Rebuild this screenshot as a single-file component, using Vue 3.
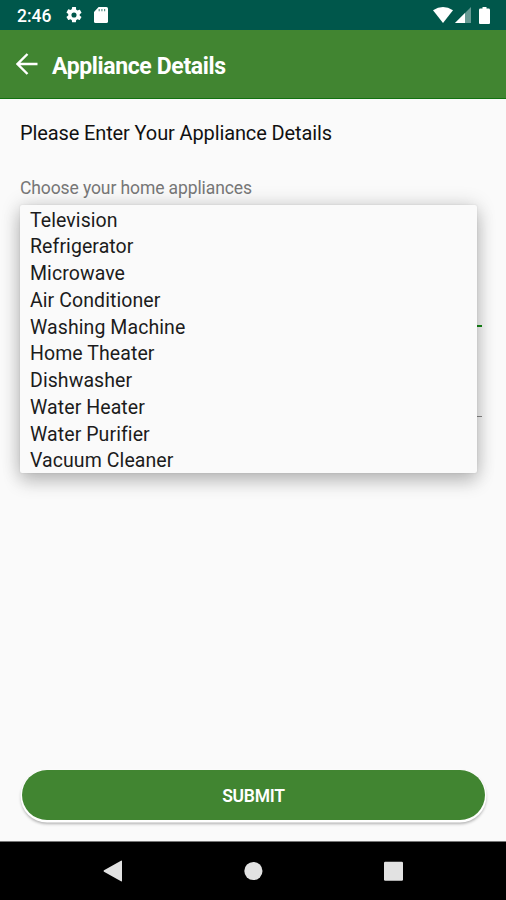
<template>
  <div class="screen">
    <header class="status-bar">
      <div class="status-left">
        <span class="clock">2:46</span>
        <svg class="icon-gear" viewBox="2 2 20 20">
          <path
            d="M19.14 12.94c.04-.3.06-.61.06-.94 0-.32-.02-.64-.07-.94l2.03-1.58a.49.49 0 0 0 .12-.61l-1.92-3.32a.49.49 0 0 0-.59-.22l-2.39.96a7 7 0 0 0-1.62-.94l-.36-2.54A.48.48 0 0 0 13.92 2h-3.84a.48.48 0 0 0-.48.41l-.36 2.54c-.59.24-1.13.57-1.62.94l-2.39-.96a.48.48 0 0 0-.59.22L2.72 8.47a.48.48 0 0 0 .12.61l2.03 1.58c-.05.3-.09.63-.09.94s.02.64.07.94l-2.03 1.58a.49.49 0 0 0-.12.61l1.92 3.32c.12.22.37.29.59.22l2.39-.96c.5.38 1.03.7 1.62.94l.36 2.54c.05.24.24.41.48.41h3.84c.24 0 .44-.17.47-.41l.36-2.54a7 7 0 0 0 1.62-.94l2.39.96c.22.08.47 0 .59-.22l1.92-3.32a.48.48 0 0 0-.12-.61zM12 15.2a3.2 3.2 0 1 1 0-6.4 3.2 3.2 0 0 1 0 6.4z"
          />
        </svg>
        <svg class="icon-card" viewBox="0 0 14 16">
          <path d="M4.6 0H12.4Q14 0 14 1.6V14.4Q14 16 12.4 16H1.6Q0 16 0 14.4V5z" />
          <path class="contacts" d="M5.2 2v2.2M7.9 2v2.2M10.6 2v2.2" />
        </svg>
      </div>
      <div class="status-right">
        <svg class="icon-wifi" viewBox="0 0 20 16">
          <path d="M0 3.2Q10-3.2 20 3.2L10 16z" />
        </svg>
        <svg class="icon-signal" viewBox="0 0 16 16">
          <path opacity="0.4" d="M0 16L16 0V16z" />
          <path d="M0 16L10 6V16z" />
        </svg>
        <svg class="icon-battery" viewBox="0 0 11 17">
          <path d="M3.5 0h4v1.6H9.6q1.4 0 1.4 1.4V16q0 1-1 1H1q-1 0-1-1V3q0-1.4 1.4-1.4h2.1z" />
        </svg>
      </div>
    </header>

    <div class="toolbar">
      <svg class="icon-back" viewBox="0 0 22 22">
        <path d="M21.5 11H2M11.5 1L1.5 11l10 10" />
      </svg>
      <h1>Appliance Details</h1>
    </div>

    <main class="content">
      <h2>Please Enter Your Appliance Details</h2>
      <label class="field-label">Choose your home appliances</label>
      <div class="fields">
        <div class="field active"></div>
        <div class="field"></div>
        <ul class="dropdown">
          <li v-for="appliance in appliances" :key="appliance">{{ appliance }}</li>
        </ul>
      </div>
      <button class="submit" type="button">SUBMIT</button>
    </main>

    <nav class="nav-bar">
      <svg viewBox="0 0 20 22"><path d="M19 1.2V20.8Q19 21.8 18 21.2L1 11.8Q0 11 1 10.2L18 .8Q19 .2 19 1.2z" /></svg>
      <svg viewBox="0 0 20 22"><circle cx="10.4" cy="11" r="9.1" /></svg>
      <svg viewBox="0 0 20 22"><rect x="1" y="1.7" width="19" height="19" rx="1.2" /></svg>
    </nav>
  </div>
</template>

<script setup>
import { ref } from "vue";

const appliances = ref([
  "Television",
  "Refrigerator",
  "Microwave",
  "Air Conditioner",
  "Washing Machine",
  "Home Theater",
  "Dishwasher",
  "Water Heater",
  "Water Purifier",
  "Vacuum Cleaner",
]);
</script>

<style>
body {
  margin: 0;
  background: #fafafa;
}
</style>

<style scoped>
.screen {
  display: flex;
  flex-direction: column;
  height: 900px;
  overflow: hidden;
  background: #fafafa;
  font-family: Roboto, "Noto Sans", sans-serif;
}

.status-bar {
  display: flex;
  justify-content: space-between;
  box-sizing: border-box;
  height: 30px;
  padding: 0 16px 0 17px;
  background: #00574b;
  color: #fff;
  fill: #fff;
}

.status-left,
.status-right {
  display: flex;
  align-items: center;
}

.clock {
  font-size: 17.5px;
  font-weight: 500;
  line-height: 30px;
  padding-top: 2px;
  width: 49px;
}

.icon-gear {
  width: 16px;
  height: 16px;
  margin-right: 12px;
}

.icon-card {
  width: 14px;
  height: 16px;
}

.contacts {
  stroke: #00574b;
  stroke-width: 1.2;
  stroke-opacity: 0.65;
}

.icon-wifi {
  width: 20px;
  height: 16px;
  margin-right: 2px;
}

.icon-signal {
  width: 16px;
  height: 16px;
  margin-right: 8px;
}

.icon-battery {
  width: 11px;
  height: 17px;
}

.toolbar {
  display: flex;
  align-items: center;
  box-sizing: border-box;
  height: 69px;
  padding: 0 16px;
  background: #418531;
  border-bottom: 1px solid #127210;
  color: #fff;
}

.icon-back {
  width: 22px;
  height: 22px;
  margin-right: 14px;
  fill: none;
  stroke: #fff;
  stroke-width: 2.4;
}

h1 {
  margin: 5px 0 0;
  font-size: 23px;
  font-weight: 700;
  line-height: 28px;
  letter-spacing: -0.37px;
}

.content {
  display: flex;
  flex: 1;
  flex-direction: column;
  padding: 20px 20px 21px;
}

h2 {
  margin: 0;
  color: #111;
  font-size: 20px;
  font-weight: 400;
  line-height: 28px;
  letter-spacing: -0.12px;
}

.field-label {
  margin-top: 29px;
  color: #777;
  font-size: 17.5px;
  line-height: 24px;
  letter-spacing: -0.1px;
}

.fields {
  position: relative;
  margin: 5px 4px 0 0;
}

.field {
  box-sizing: border-box;
  height: 90px;
  border-bottom: 1px solid #8a8a8a;
}

.field.active {
  height: 122px;
  border-bottom: 2px solid #168a16;
}

.dropdown {
  position: absolute;
  top: 0;
  left: 0;
  box-sizing: border-box;
  width: 457px;
  height: 268px;
  margin: 0;
  padding: 2.5px 10px 0;
  list-style: none;
  background: #fafafa;
  border-radius: 2px;
  box-shadow: 0 9px 18px rgba(0, 0, 0, 0.2), 0 0 20px rgba(0, 0, 0, 0.16),
    0 0 2px rgba(0, 0, 0, 0.1);
}

.dropdown li {
  color: #1c1c1c;
  font-size: 19.5px;
  line-height: 26.75px;
  letter-spacing: 0.08px;
}

.submit {
  height: 50px;
  margin: auto 1px 0 2px;
  padding: 2px 0 0;
  border: none;
  border-radius: 25px;
  background: #418531;
  box-shadow: 0 1px 0 1.5px #fff, 0 3px 3px 1px rgba(0, 0, 0, 0.3);
  color: #fff;
  font-family: inherit;
  font-size: 17.5px;
  font-weight: 600;
  letter-spacing: -0.25px;
}

.nav-bar {
  display: flex;
  align-items: center;
  justify-content: center;
  gap: 120px;
  box-sizing: border-box;
  height: 59px;
  border-top: 1px solid #777;
  background: #000;
}

.nav-bar svg {
  width: 20px;
  height: 22px;
  fill: #e2e2e2;
}
</style>
